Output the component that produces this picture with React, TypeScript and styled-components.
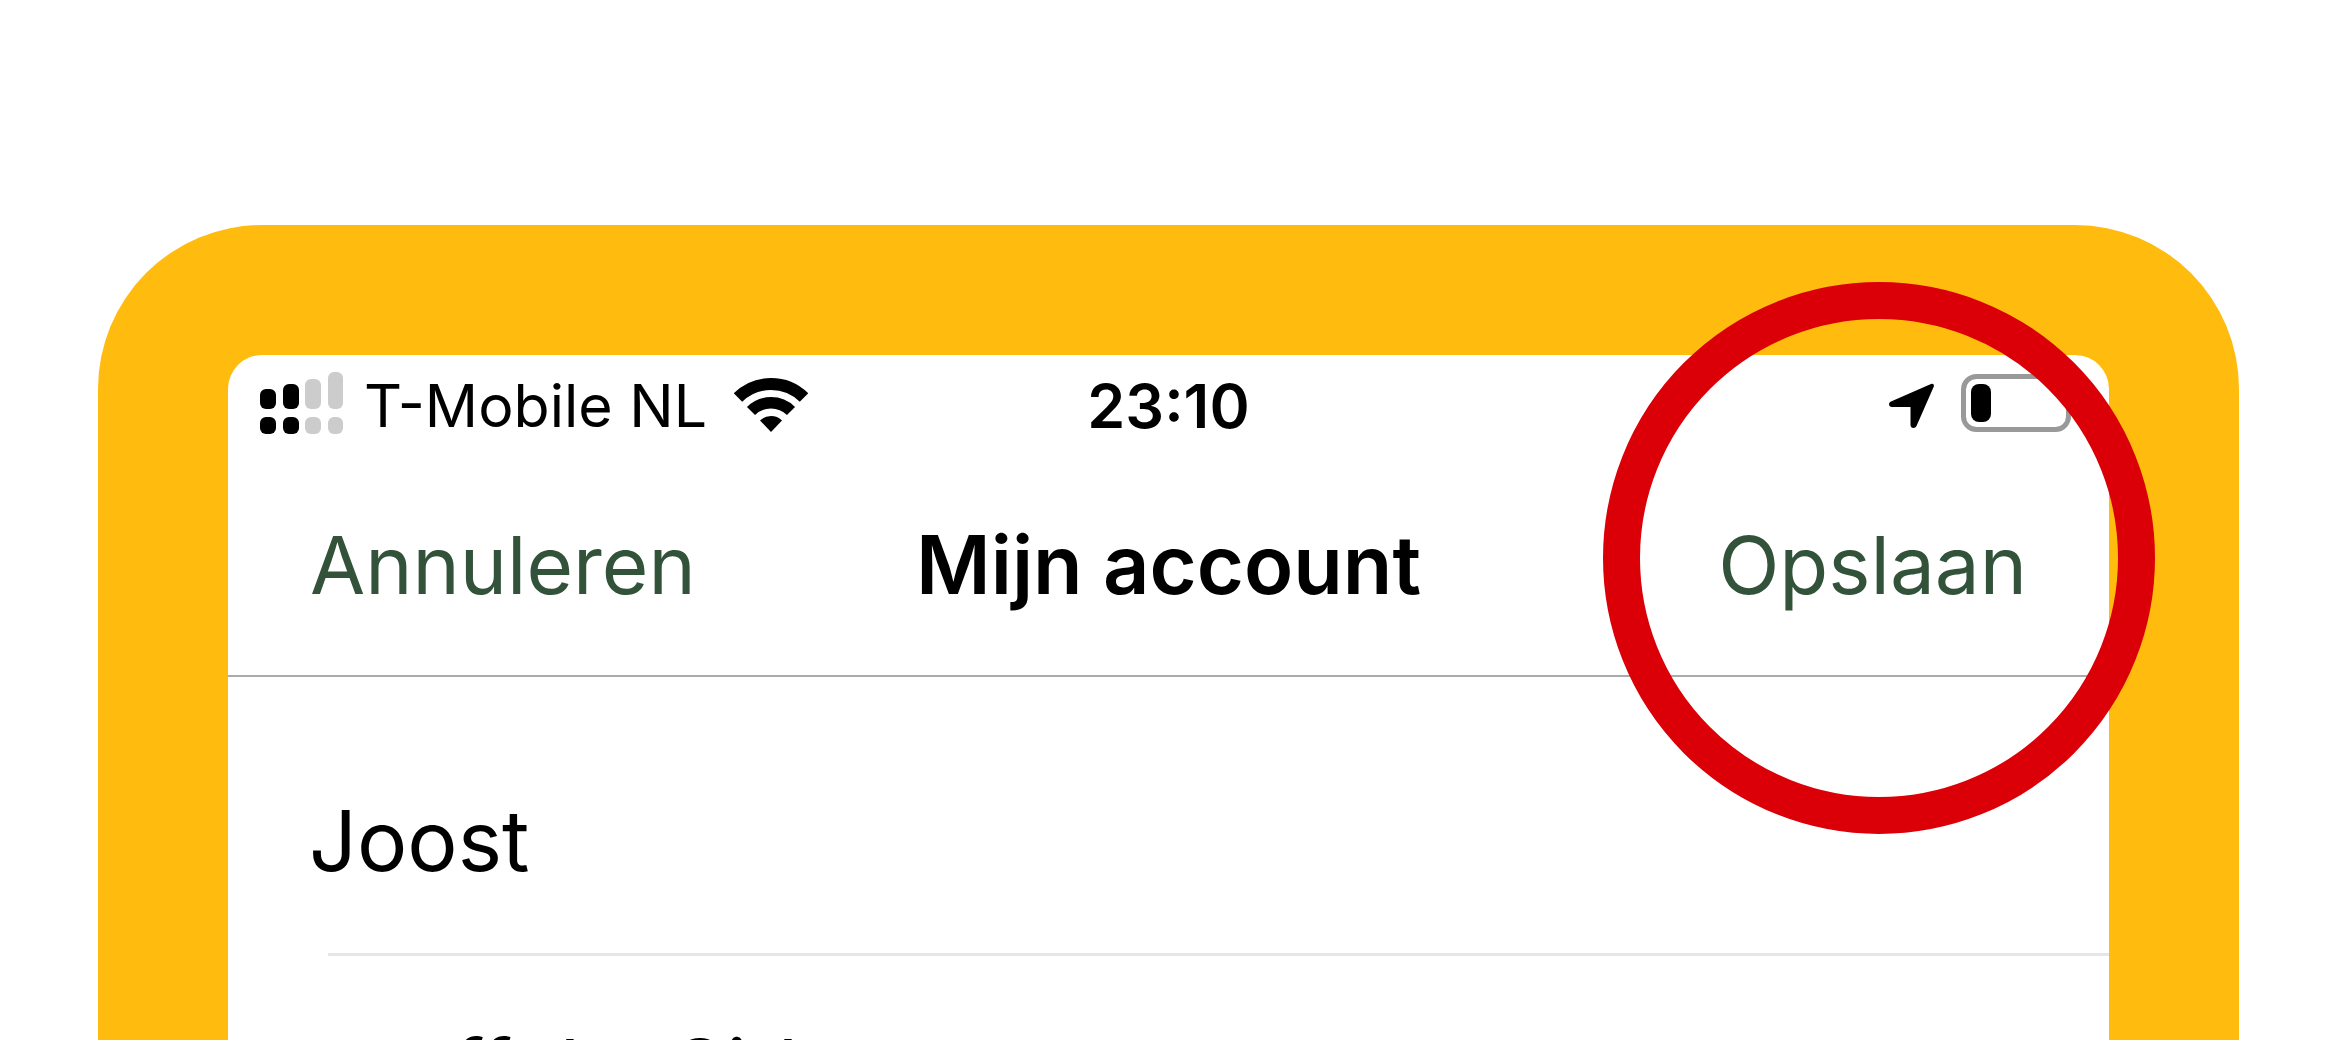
import React from "react";
import styled, { createGlobalStyle } from "styled-components";

const Global = createGlobalStyle`
  *, *::before, *::after { box-sizing: border-box; }
  html, body, #root { height: 100%; }
  body {
    margin: 0;
    background: #fff;
    color: #000;
    font-family: Inter, "Liberation Sans", sans-serif;
    overflow: hidden;
  }
`;

const Page = styled.main`
  height: 100vh;
  padding: 225px 97px 0 98px;
  overflow: hidden;
`;

const Frame = styled.div`
  position: relative;
  padding: 130px 130px 0;
  border-radius: 164px 164px 0 0;
  background: #ffbc0f;
`;

const Screen = styled.div`
  border-radius: 34px 34px 0 0;
  background: #fff;
`;

const StatusBar = styled.div`
  display: grid;
  grid-template-columns: 1fr auto 1fr;
  align-items: center;
  height: 102px;
  padding: 0 32px 6px;
`;

const StatusGroup = styled.div`
  display: flex;
  align-items: center;
  gap: 21px;
`;

const StatusEnd = styled(StatusGroup)`
  justify-content: flex-end;
  gap: 26px;
  padding-right: 6px;
`;

const Carrier = styled.span`
  padding: 6px 6px 0 0;
  font-size: 59px;
  line-height: 72px;
  white-space: nowrap;
`;

const Clock = styled.time`
  padding-top: 6px;
  font-size: 61px;
  font-weight: 600;
  line-height: 72px;
`;

const NavBar = styled.header`
  display: grid;
  grid-template-columns: 1fr auto 1fr;
  align-items: center;
  height: 220px;
  padding: 0 82px 2px;
  border-bottom: 2px solid #aaa;
`;

const NavButton = styled.button<{ $end?: boolean }>`
  justify-self: ${(p) => (p.$end ? "end" : "start")};
  padding: 0;
  border: 0;
  background: none;
  color: #33523a;
  font: 400 80px/100px Inter, "Liberation Sans", sans-serif;
  cursor: pointer;
`;

const Title = styled.h1`
  margin: 0;
  font-size: 81px;
  font-weight: 600;
  line-height: 100px;
`;

const Form = styled.form`
  padding-top: 50px;
`;

const Row = styled.label`
  display: block;
  padding: 32px 0 0 81px;
`;

const Field = styled.input`
  display: block;
  width: 100%;
  height: 194px;
  padding: 0 0 32px;
  border: 0;
  outline: 0;
  background: none;
  color: #000;
  font: 400 84px/100px Inter, "Liberation Sans", sans-serif;
`;

const Divider = styled.hr`
  height: 3px;
  margin: 0 0 0 100px;
  border: 0;
  background: #e6e6e6;
`;

const Highlight = styled.div`
  position: absolute;
  top: 57px;
  right: 84px;
  width: 552px;
  height: 552px;
  border: 37px solid #db0007;
  border-radius: 50%;
  pointer-events: none;
`;

const Signal = () => (
  <svg width="83" height="62" viewBox="0 0 83 62" aria-label="Signaal">
    <rect x="0" y="17" width="16" height="20" rx="6" />
    <rect x="23" y="12" width="16" height="25" rx="6" />
    <rect x="45" y="7" width="16" height="30" rx="6" fill="#ccc" />
    <rect x="68" y="0" width="15" height="37" rx="6" fill="#ccc" />
    <rect x="0" y="45" width="16" height="17" rx="6" />
    <rect x="23" y="45" width="16" height="17" rx="6" />
    <rect x="45" y="45" width="16" height="17" rx="6" fill="#ccc" />
    <rect x="68" y="45" width="15" height="17" rx="6" fill="#ccc" />
  </svg>
);

const Wifi = () => (
  <svg width="74" height="58" viewBox="0 -2 74 58" aria-label="Wifi">
    <path d="M4 21.500a47 47 0 0 1 66 0" fill="none" stroke="#000" strokeWidth="12" />
    <path d="M17 35a28.500 28.500 0 0 1 40 0" fill="none" stroke="#000" strokeWidth="11.500" />
    <path d="M26 44.500a16 16 0 0 1 22 0L37 56z" />
  </svg>
);

const Location = () => (
  <svg width="46" height="52" viewBox="0 -6 46 52" aria-label="Locatie">
    <path d="M2 18.500 42 1c2-.8 3.500.7 2.700 2.700L27.500 43c-1.300 3-6 2.500-6-1V24H3c-3.500 0-4-4.300-1-5.500z" />
  </svg>
);

const Battery = () => (
  <svg width="110" height="58" viewBox="0 0 110 58" aria-label="Batterij">
    <rect x="2.500" y="2.500" width="105" height="53" rx="13" fill="none" stroke="#999" strokeWidth="5" />
    <rect x="10" y="10" width="20" height="38" rx="8" />
  </svg>
);

export default function App() {
  return (
    <>
      <Global />
      <Page>
        <Frame>
          <Screen>
            <StatusBar>
              <StatusGroup>
                <Signal />
                <Carrier>T-Mobile NL</Carrier>
                <Wifi />
              </StatusGroup>
              <Clock>23:10</Clock>
              <StatusEnd>
                <Location />
                <Battery />
              </StatusEnd>
            </StatusBar>
            <NavBar>
              <NavButton type="button">Annuleren</NavButton>
              <Title>Mijn account</Title>
              <NavButton type="button" $end>Opslaan</NavButton>
            </NavBar>
            <Form>
              <Row>
                <Field aria-label="Voornaam" defaultValue="Joost" />
              </Row>
              <Divider />
              <Row>
                <Field aria-label="Achternaam" defaultValue="aanffolw Sid" />
              </Row>
            </Form>
          </Screen>
          <Highlight />
        </Frame>
      </Page>
    </>
  );
}
